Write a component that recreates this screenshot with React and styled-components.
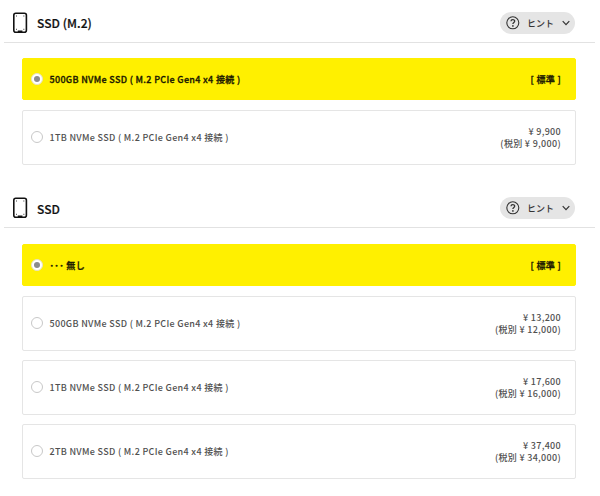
import React from "react";
import styled, { createGlobalStyle } from "styled-components";

const Global = createGlobalStyle`
  * { box-sizing: border-box; }
  body { margin: 0; background: #fff; font-family: "Noto Sans CJK JP", sans-serif; color: #222; }
`;
const Page = styled.main`
  width: 600px;
  height: 496px;
  overflow: hidden;
  background: #fff;
`;
const Section = styled.section`
  height: ${(p) => (p.$first ? 186 : 310)}px;
`;
const Header = styled.header`
  height: ${(p) => (p.$first ? 43 : 42)}px;
  margin: 0 5px 0 4px;
  padding: ${(p) => (p.$first ? 3 : 2)}px 20px 0 8px;
  border-bottom: 1px solid #e2e2e2;
  display: flex;
  align-items: center;
`;
const Title = styled.h2`
  margin: 0 auto 0 9px;
  padding-top: ${(p) => (p.$first ? 1 : 3)}px;
  font-size: 12px;
  line-height: 18px;
  font-weight: 500;
  letter-spacing: 0.05px;
  -webkit-text-stroke: 0.2px;
  color: #111;
`;
const Hint = styled.button`
  width: 75px;
  height: 22px;
  padding: 0 5px 0 6px;
  border: 0;
  border-radius: 11px;
  background: #e5e5e5;
  display: flex;
  align-items: center;
  font: 500 9px/22px "Noto Sans CJK JP", sans-serif;
  color: #333;
`;
const HintLabel = styled.span`
  margin: 0 auto 0 7px;
  padding-top: 2px;
`;
const Options = styled.div`
  padding: ${(p) => (p.$first ? 15 : 16)}px 24px 0 22px;
  display: grid;
  gap: 10px;
`;
const Option = styled.label`
  height: ${(p) => (p.$selected ? 42 : 54.5)}px;
  margin-bottom: ${(p) => (p.$selected ? 0 : -0.5)}px;
  padding: 0 14px 0 8px;
  border: 1px solid ${(p) => (p.$selected ? "#fff000" : "#e5e5e5")};
  background: ${(p) => (p.$selected ? "#fff000" : "#fff")};
  border-radius: 2px;
  display: flex;
  align-items: center;
  font-size: 9px;
  line-height: 12px;
  letter-spacing: 0.32px;
  font-weight: 500;
  color: ${(p) => (p.$selected ? "#1a1800" : "#505050")};
  -webkit-text-stroke: ${(p) => (p.$selected ? 0.3 : 0)}px;
`;
const Radio = styled.span`
  width: 12px;
  height: 12px;
  border: 1px solid ${(p) => (p.$selected ? "#e6e2c4" : "#c8c8c8")};
  border-radius: 50%;
  background: #fff;
  display: grid;
  place-items: center;
  margin-right: 6.5px;
`;
const Dot = styled.span`
  width: 6px;
  height: 6px;
  border-radius: 50%;
  background: #8c8c8c;
`;
const Name = styled.span`
  margin-right: auto;
  padding-top: 2px;
`;
const Price = styled.span`
  padding-top: 2px;
  text-align: right;
  white-space: pre-line;
`;

const Drive = () => (
  <svg width="16" height="22" viewBox="0 0 16 22" fill="none" stroke="#111">
    <rect x="1.8" y="1.3" width="12.6" height="18.9" rx="2" strokeWidth="1.6" />
    <path d="M5.8 19.4h4.6" strokeWidth="1.8" />
    <path d="M4 4h.9M11.4 4h.9M4 17.3h.9M11.4 17.3h.9" strokeWidth=".9" />
  </svg>
);
const Question = () => (
  <svg width="14" height="14" viewBox="0 0 14 14" fill="none" stroke="#333">
    <circle cx="6.8" cy="6.8" r="6" strokeWidth="1.1" />
    <path d="M5 5.3C5 3 8.7 3.1 8.7 5.1 8.7 6.5 6.9 6.5 6.9 8.1" strokeWidth="1.3" />
    <circle cx="6.9" cy="9.9" r=".85" fill="#333" stroke="none" />
  </svg>
);
const Chevron = () => (
  <svg width="8" height="6" viewBox="0 0 8 6" fill="none" stroke="#333" strokeWidth="1.2">
    <path d="M.7 1.2L4 4.7l3.3-3.5" />
  </svg>
);

const groups = [
  { title: "SSD (M.2)", items: [["500GB NVMe SSD ( M.2 PCIe Gen4 x4 接続 )", "[ 標準 ]"], ["1TB NVMe SSD ( M.2 PCIe Gen4 x4 接続 )", "¥ 9,900\n(税別 ¥ 9,000)"]] },
  { title: "SSD", items: [["･･･ 無し", "[ 標準 ]"], ["500GB NVMe SSD ( M.2 PCIe Gen4 x4 接続 )", "¥ 13,200\n(税別 ¥ 12,000)"], ["1TB NVMe SSD ( M.2 PCIe Gen4 x4 接続 )", "¥ 17,600\n(税別 ¥ 16,000)"], ["2TB NVMe SSD ( M.2 PCIe Gen4 x4 接続 )", "¥ 37,400\n(税別 ¥ 34,000)"]] },
];

export default function App() {
  return (
    <Page>
      <Global />
      {groups.map((g, i) => (
        <Section key={g.title} $first={i === 0}>
          <Header $first={i === 0}>
            <Drive />
            <Title $first={i === 0}>{g.title}</Title>
            <Hint><Question /><HintLabel>ヒント</HintLabel><Chevron /></Hint>
          </Header>
          <Options $first={i === 0}>
            {g.items.map(([name, price], n) => (
              <Option key={name} $selected={n === 0}>
                <Radio $selected={n === 0}>{n === 0 && <Dot />}</Radio>
                <Name>{name}</Name>
                <Price>{price}</Price>
              </Option>
            ))}
          </Options>
        </Section>
      ))}
    </Page>
  );
}
